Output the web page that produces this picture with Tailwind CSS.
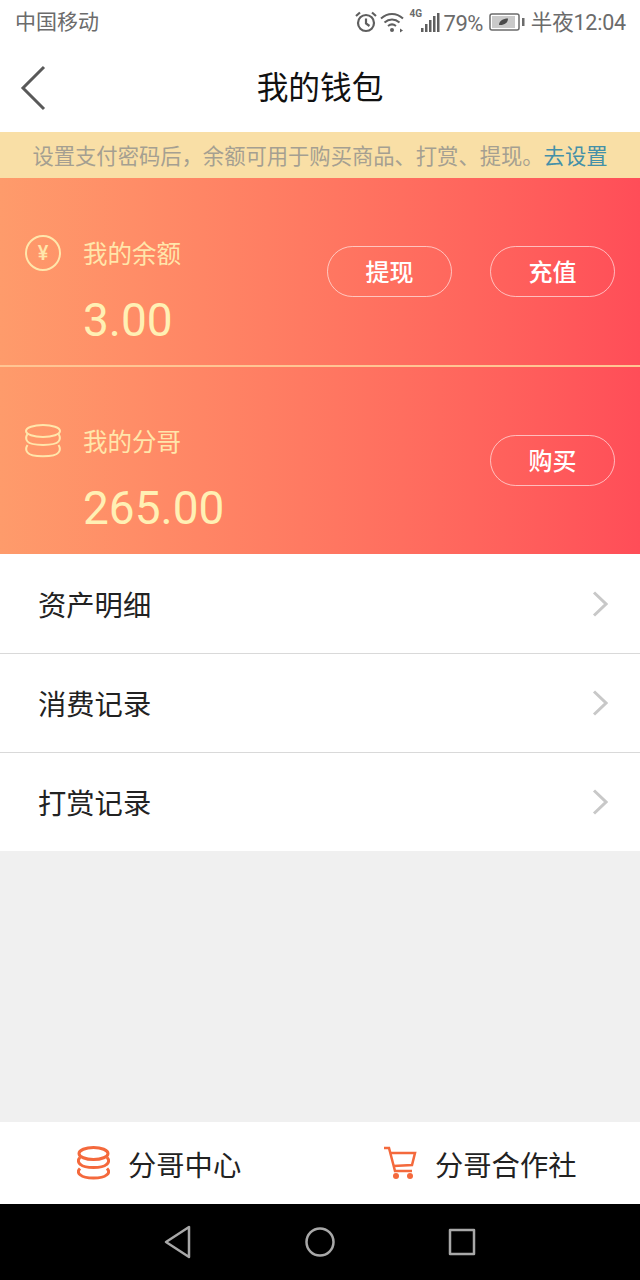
<!DOCTYPE html>
<html lang="zh-CN">
<head>
    <meta charset="UTF-8">
    <meta name="viewport" content="width=device-width, initial-scale=1.0">
    <title>我的钱包</title>
    <script src="https://cdn.jsdelivr.net/npm/@tailwindcss/browser@4"></script>
</head>
<body class="bg-[#f0f0f0] font-['Roboto','Noto_Sans_CJK_SC',sans-serif]">
    <div class="w-[640px] h-[1280px] flex flex-col overflow-hidden">
        <!-- status bar -->
        <div class="h-[44px] bg-white flex items-center justify-between pl-[15px] pr-[14px] text-[21px] text-[#6b6b6b]">
            <span class="pt-[2px]">中国移动</span>
            <div class="flex items-center">
                <svg class="w-[24px] h-[24px]" viewBox="0 0 24 24" fill="none" stroke="#5f5f5f" stroke-width="2.2">
                    <circle cx="12" cy="13" r="8"/>
                    <path d="M12 8.500V13.500L15.500 16M2 6L6 2.500M22 6L18 2.500"/>
                </svg>
                <svg class="w-[28px] h-[24px] ml-[1px] mr-[2px]" viewBox="0 0 28 24" fill="none" stroke="#5f5f5f" stroke-width="2">
                    <path d="M2 8.500C8.500 2.500 17.500 2.500 24 8.500M5.500 12.500C10 8.500 16 8.500 20.500 12.500M9 16C11.500 14 14.500 14 17 16"/>
                    <circle cx="13" cy="20" r="2" fill="#5f5f5f" stroke="none"/>
                    <path d="M21 18.500L24 20.500L21 22.500Z" fill="#5f5f5f" stroke="none"/>
                </svg>
                <div class="relative w-[32px] h-[24px]">
                    <span class="absolute left-[1px] top-[-2px] text-[10px] leading-[12px] font-bold">4G</span>
                    <svg class="absolute left-0 top-0 w-[32px] h-[24px]" viewBox="0 0 32 24" fill="#5f5f5f">
                        <rect x="12" y="18" width="2.500" height="4"/>
                        <rect x="16" y="14" width="2.500" height="8"/>
                        <rect x="20" y="10" width="2.500" height="12"/>
                        <rect x="24" y="6" width="2.500" height="16"/>
                        <rect x="28" y="3" width="2.500" height="19"/>
                    </svg>
                </div>
                <span class="ml-[3px] pt-[2px] text-[22px] tracking-[-0.5px]">79%</span>
                <svg class="w-[36px] h-[20px] ml-[6px]" viewBox="0 0 36 20" fill="none">
                    <rect x="1" y="2" width="29" height="16" rx="2" stroke="#6b6b6b" stroke-width="1.500"/>
                    <rect x="3" y="4" width="23" height="12" fill="#c9c9c9"/>
                    <path d="M10 13C10 9 14 6.500 19 6.500C19 11 15 13.500 10 13Z" fill="#4a4a4a"/>
                    <rect x="33" y="6" width="2.500" height="8" fill="#6b6b6b"/>
                </svg>
                <span class="ml-[6px] pt-[2px] text-[21.5px] tracking-[-0.2px]">半夜12:04</span>
            </div>
        </div>

        <!-- title bar -->
        <div class="relative h-[88px] bg-white flex items-center justify-center">
            <svg class="absolute left-[20px] top-[21px] w-[26px] h-[46px]" viewBox="0 0 26 46" fill="none" stroke="#595959" stroke-width="3">
                <path d="M24 2L3 23L24 44"/>
            </svg>
            <h1 class="pt-[2px] text-[31.7px] text-[#111]">我的钱包</h1>
        </div>

        <!-- pay password notice -->
        <div class="h-[46px] pt-[4px] bg-[#f9dfa6] flex items-center justify-center text-[21.3px] text-[#a59f91]">
            <p>设置支付密码后，余额可用于购买商品、打赏、提现。<span class="text-[#4490a8]">去设置</span></p>
        </div>

        <!-- wallet -->
        <div class="bg-gradient-to-r from-[#fe9b6b] to-[#ff4d58]">
            <div class="h-[188px] flex justify-between pl-[25px] pr-[25px]">
                <div class="flex pt-[57px] items-start">
                    <div class="w-[36px] h-[36px] rounded-full border-2 border-[#ffe6ab] flex items-center justify-center text-[20px] font-medium text-[#ffe6ab]">¥</div>
                    <div class="ml-[22px]">
                        <p class="text-[24.5px] leading-[40px] text-[#ffe6ab]">我的余额</p>
                        <p class="mt-[18px] text-[46px] leading-[54px] text-[#fff0b4]">3.00</p>
                    </div>
                </div>
                <div class="flex gap-[38px] pt-[68px] items-start">
                    <button class="w-[125px] h-[51px] pt-[2px] rounded-full border border-white/60 text-[24px] font-medium text-white">提现</button>
                    <button class="w-[125px] h-[51px] pt-[2px] rounded-full border border-white/60 text-[24px] font-medium text-white">充值</button>
                </div>
            </div>
            <div class="h-[2px] -mt-[1px] mb-[1px] bg-[#ffc593]"></div>
            <div class="h-[186px] flex justify-between pl-[25px] pr-[25px]">
                <div class="flex pt-[56px] items-start">
                    <svg class="w-[36px] h-[36px]" viewBox="0 0 36 36" fill="none" stroke="#ffe6ab" stroke-width="2">
                        <ellipse cx="18" cy="7" rx="17" ry="6"/>
                        <path d="M2.500 10C0.500 13 0.500 15 2.500 17.500C6 22 30 22 33.500 17.500C35.500 15 35.500 13 33.500 10"/>
                        <path d="M2.500 21C0.500 24 0.500 26 2.500 28.500C6 33.500 30 33.500 33.500 28.500C35.500 26 35.500 24 33.500 21"/>
                    </svg>
                    <div class="ml-[22px] -mt-[1px]">
                        <p class="text-[24.5px] leading-[40px] text-[#ffe6ab]">我的分哥</p>
                        <p class="mt-[18px] text-[46px] leading-[54px] text-[#fff0b4]">265.00</p>
                    </div>
                </div>
                <div class="pt-[67px]">
                    <button class="w-[125px] h-[51px] pt-[2px] rounded-full border border-white/60 text-[24px] font-medium text-white">购买</button>
                </div>
            </div>
        </div>

        <!-- records -->
        <div class="bg-white">
            <div class="h-[100px] flex items-center justify-between pl-[38px] pr-[32px] border-b border-[#d9d9d9] text-[28.3px] text-[#222]">
                <span class="pt-[8px]">资产明细</span>
                <svg class="w-[16px] h-[26px]" viewBox="0 0 16 26" fill="none" stroke="#c8c8c8" stroke-width="3"><path d="M2 1.500L14 13L2 24.500"/></svg>
            </div>
            <div class="h-[99px] flex items-center justify-between pl-[38px] pr-[32px] border-b border-[#d9d9d9] text-[28.3px] text-[#222]">
                <span class="pt-[6px]">消费记录</span>
                <svg class="w-[16px] h-[26px]" viewBox="0 0 16 26" fill="none" stroke="#c8c8c8" stroke-width="3"><path d="M2 1.500L14 13L2 24.500"/></svg>
            </div>
            <div class="h-[98px] flex items-center justify-between pl-[38px] pr-[32px] text-[28.3px] text-[#222]">
                <span class="pt-[6px]">打赏记录</span>
                <svg class="w-[16px] h-[26px]" viewBox="0 0 16 26" fill="none" stroke="#c8c8c8" stroke-width="3"><path d="M2 1.500L14 13L2 24.500"/></svg>
            </div>
        </div>

        <div class="flex-1"></div>

        <!-- bottom tabs -->
        <div class="h-[82px] bg-white flex items-center text-[28.3px] text-[#222]">
            <div class="w-[320px] flex items-center pl-[77px]">
                <svg class="w-[33px] h-[34px]" viewBox="0 0 33 34" fill="none" stroke="#f4693c" stroke-width="3">
                    <ellipse cx="16.500" cy="7.500" rx="14.500" ry="6"/>
                    <path d="M3 11.500C0.500 14 1 16.500 3.500 18.500C8 22.500 25 22.500 29.500 18.500C32 16.500 32.500 14 30 11.500"/>
                    <path d="M3 22.500C0.500 25 1 27.500 3.500 29C8 33 25 33 29.500 29C32 27.500 32.500 25 30 22.500"/>
                </svg>
                <span class="ml-[18px] pt-[8px]">分哥中心</span>
            </div>
            <div class="w-[320px] flex items-center pl-[63px]">
                <svg class="w-[34px] h-[34px]" viewBox="0 0 34 34" fill="none" stroke="#f4693c" stroke-width="2.500">
                    <path d="M1 2H6L12 25H29"/>
                    <path d="M7 7H32L29 19L10.500 20"/>
                    <circle cx="13" cy="30" r="3" fill="#f4693c" stroke="none"/>
                    <circle cx="27" cy="30" r="3" fill="#f4693c" stroke="none"/>
                </svg>
                <span class="ml-[18px] pt-[8px]">分哥合作社</span>
            </div>
        </div>

        <!-- android nav -->
        <div class="h-[76px] bg-black flex items-center justify-center gap-[113px] pb-[1px]">
            <svg class="w-[28px] h-[34px]" viewBox="0 0 28 34" fill="none" stroke="#a8a8a8" stroke-width="2.500" stroke-linejoin="round"><path d="M25 2V32L2 17Z"/></svg>
            <svg class="w-[30px] h-[30px]" viewBox="0 0 30 30" fill="none" stroke="#a8a8a8" stroke-width="2.500"><circle cx="15" cy="15" r="13.500"/></svg>
            <svg class="w-[28px] h-[28px]" viewBox="0 0 28 28" fill="none" stroke="#a8a8a8" stroke-width="2.500" stroke-linejoin="round"><rect x="2" y="2" width="24" height="24"/></svg>
        </div>
    </div>
</body>
</html>
